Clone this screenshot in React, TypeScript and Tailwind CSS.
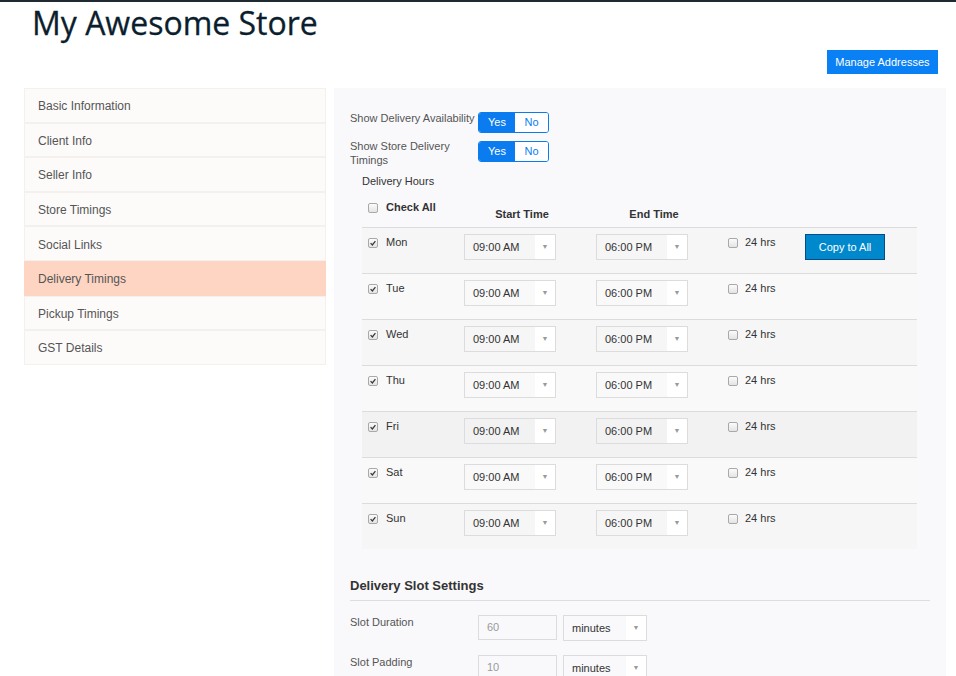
import React from 'react'

const menu = [
  'Basic Information',
  'Client Info',
  'Seller Info',
  'Store Timings',
  'Social Links',
  'Delivery Timings',
  'Pickup Timings',
  'GST Details',
]

const days = ['Mon', 'Tue', 'Wed', 'Thu', 'Fri', 'Sat', 'Sun']

function Check({ checked }: { checked?: boolean }) {
  return (
    <span className="inline-flex h-[10px] w-[10px] items-center justify-center rounded-[2px] border border-[#a9a9a9] bg-gradient-to-b from-[#fbfbfb] to-[#e4e4e4]">
      {checked && (
        <svg viewBox="0 0 10 10" className="h-[8px] w-[8px]">
          <path d="M2 5.2 L4.2 7.4 L8 2.6" fill="none" stroke="#3a3a3a" strokeWidth="1.6" />
        </svg>
      )}
    </span>
  )
}

function Select({ value, w }: { value: string; w: string }) {
  return (
    <div className={`flex h-[26px] items-stretch border border-[#dcdcdc] ${w}`}>
      <div className="flex flex-1 items-center pl-[8px] text-[11px] text-[#333]">{value}</div>
      <div className="flex w-[20px] items-center justify-center bg-white text-[7px] text-[#999]">▼</div>
    </div>
  )
}

function Toggle() {
  return (
    <div className="flex h-[21px] overflow-hidden rounded-[3px] border border-[#0a7cf0] text-[11px]">
      <div className="flex w-[36px] items-center justify-center bg-[#0a7cf0] text-white">Yes</div>
      <div className="flex w-[33px] items-center justify-center bg-white text-[#0a7cf0]">No</div>
    </div>
  )
}

export default function App() {
  return (
    <div className="h-[676px] w-[956px] overflow-hidden border-t-2 border-[#1f2a33] bg-white font-['Liberation_Sans',Arial,sans-serif]">
      <h1 className="pl-[32px] pt-[2px] font-['Open_Sans',sans-serif] text-[32px] leading-[38px] text-[#0b1e2e] [-webkit-text-stroke:0.3px_#0b1e2e]">
        My Awesome Store
      </h1>

      <div className="mt-[8px] flex justify-end pr-[18px]">
        <button className="h-[24px] bg-[#0a80f5] px-[8.5px] text-[11px] text-white">Manage Addresses</button>
      </div>

      <div className="mt-[14px] flex gap-[8px] pl-[24px]">
        <div className="flex h-[277px] w-[302px] flex-col">
          {menu.map((m) => (
            <div
              key={m}
              className={`flex h-[34.6px] items-center border pl-[13px] pt-[2px] text-[12px] text-[#555] ${
                m === 'Delivery Timings' ? 'border-[#fed5c3] bg-[#fed5c3]' : 'border-[#f4f0ee] bg-[#fdfbfa]'
              }`}
            >
              {m}
            </div>
          ))}
        </div>

        <div className="h-[600px] w-[612px] bg-[#f9f9fb] pl-[16px] pr-[16px] pt-[24px]">
          <div className="flex items-start">
            <div className="w-[128px] text-[11px] leading-[13px] text-[#555]">Show Delivery Availability</div>
            <Toggle />
          </div>
          <div className="mt-[8px] flex items-start">
            <div className="-mt-[2px] w-[120px] pr-[4px] text-[11px] leading-[14px] text-[#555]">Show Store Delivery Timings</div>
            <div className="ml-[8px]">
              <Toggle />
            </div>
          </div>

          <div className="ml-[12px] w-[555px]">
            <div className="mt-[7px] text-[11px] leading-[14px] text-[#333]">Delivery Hours</div>

            <div className="mt-[9px] grid h-[30px] grid-cols-[94px_132px_132px_77px_120px] text-[11px] leading-[14px] text-[#333]">
              <div className="flex items-start gap-[8px] pl-[6px] pt-[3px]">
                <span className="mt-[3px] flex">
                  <Check />
                </span>
                <span className="font-bold">Check All</span>
              </div>
              <div className="pt-[10px] text-center font-bold">Start Time</div>
              <div className="pt-[10px] text-center font-bold">End Time</div>
              <div />
              <div />
            </div>

            {days.map((d, i) => (
              <div
                key={d}
                className={`grid h-[46px] grid-cols-[94px_132px_132px_77px_120px] border-t border-[#dcdcdc] text-[11px] leading-[14px] text-[#333] ${
                  d === 'Fri' ? 'bg-[#f2f2f2]' : i % 2 === 0 ? 'bg-[#f6f6f6]' : 'bg-[#f9f9fa]'
                }`}
              >
                <div className="flex items-start gap-[8px] pl-[6px] pt-[7px]">
                  <span className="mt-[3px] flex">
                    <Check checked />
                  </span>
                  <span>{d}</span>
                </div>
                <div className="pl-[8px] pt-[6px]">
                  <Select value="09:00 AM" w="w-[92px]" />
                </div>
                <div className="pl-[8px] pt-[6px]">
                  <Select value="06:00 PM" w="w-[92px]" />
                </div>
                <div className="flex items-start gap-[7px] pl-[8px] pt-[7px]">
                  <span className="mt-[3px] flex">
                    <Check />
                  </span>
                  <span>24 hrs</span>
                </div>
                <div className="pl-[8px] pt-[6px]">
                  {i === 0 && (
                    <button className="h-[26px] w-[80px] border border-[#0a4a86] bg-[#0088cc] text-[11px] text-white">
                      Copy to All
                    </button>
                  )}
                </div>
              </div>
            ))}
          </div>

          <div className="mt-[29px] border-b border-[#dedede] pb-[6px] text-[13px] font-bold leading-[16px] text-[#333]">
            Delivery Slot Settings
          </div>

          <div className="mt-[14px] flex items-start">
            <div className="w-[128px] text-[11px] leading-[14px] text-[#555]">Slot Duration</div>
            <div className="flex h-[25px] w-[79px] items-center border border-[#dcdcdc] pl-[8px] text-[11px] text-[#999]">60</div>
            <div className="ml-[6px]">
              <Select value="minutes" w="w-[84px] h-[25px]" />
            </div>
          </div>
          <div className="mt-[14px] flex items-start">
            <div className="w-[128px] text-[11px] leading-[14px] text-[#555]">Slot Padding</div>
            <div className="flex h-[25px] w-[79px] items-center border border-[#dcdcdc] pl-[8px] text-[11px] text-[#999]">10</div>
            <div className="ml-[6px]">
              <Select value="minutes" w="w-[84px] h-[25px]" />
            </div>
          </div>
        </div>
      </div>
    </div>
  )
}
